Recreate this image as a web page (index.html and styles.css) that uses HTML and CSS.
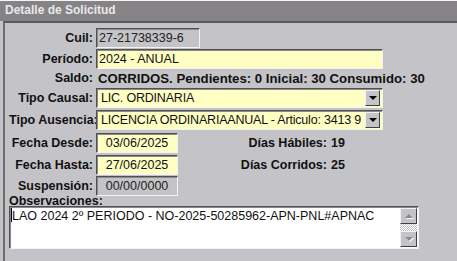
FILE: index.html
```html
<!DOCTYPE html>
<html lang="es">
<head>
    <meta charset="UTF-8">
    <title>Detalle de Solicitud</title>
    <link rel="stylesheet" href="styles.css">
</head>
<body>
    <div class="window">
        <div class="titlebar">Detalle de Solicitud</div>
        <div class="panel">
            <div class="form">
                <label class="lbl">Cuil:</label>
                <div class="row"><div class="field field-ro field-cuil">27-21738339-6</div></div>

                <label class="lbl">Período:</label>
                <div class="row"><div class="field field-edit field-wide">2024 - ANUAL</div></div>

                <label class="lbl lbl-saldo">Saldo:</label>
                <div class="row saldo">CORRIDOS. Pendientes: 0 Inicial: 30 Consumido: 30</div>

                <label class="lbl">Tipo Causal:</label>
                <div class="row">
                    <div class="field field-edit field-wide select">
                        <span class="select-text">LIC. ORDINARIA</span>
                        <span class="select-btn"><span class="arrow-down"></span></span>
                    </div>
                </div>

                <label class="lbl gap-1">Tipo Ausencia:</label>
                <div class="row gap-1">
                    <div class="field field-edit field-wide select">
                        <span class="select-text">LICENCIA ORDINARIAANUAL - Articulo: 3413 9</span>
                        <span class="select-btn"><span class="arrow-down"></span></span>
                    </div>
                </div>

                <label class="lbl gap-2">Fecha Desde:</label>
                <div class="row gap-2">
                    <div class="field field-edit field-date">03/06/2025</div>
                    <div class="info"><span class="info-label">Días Hábiles:</span> <span class="info-value">19</span></div>
                </div>

                <label class="lbl gap-1">Fecha Hasta:</label>
                <div class="row gap-1">
                    <div class="field field-edit field-date">27/06/2025</div>
                    <div class="info"><span class="info-label">Días Corridos:</span> <span class="info-value">25</span></div>
                </div>

                <label class="lbl">Suspensión:</label>
                <div class="row"><div class="field field-ro field-date">00/00/0000</div></div>
            </div>

            <div class="obs-label">Observaciones:</div>
            <div class="obs-box">
                <div class="obs-text"><span class="caret"></span>LAO 2024 2º PERIODO - NO-2025-50285962-APN-PNL#APNAC</div>
                <div class="scrollbar">
                    <div class="sb-btn"><span class="arrow-up"></span></div>
                    <div class="sb-track"></div>
                    <div class="sb-btn"><span class="arrow-down arrow-dim"></span></div>
                </div>
            </div>
        </div>
    </div>
</body>
</html>
```

FILE: styles.css
```css
* {
    margin: 0;
    padding: 0;
    box-sizing: border-box;
}

body {
    background: #c4c3c7;
    font-family: 'Liberation Sans', Arial, sans-serif;
    color: #111;
    width: 457px;
    height: 261px;
    overflow: hidden;
}

.window {
    height: 261px;
    display: flex;
    flex-direction: column;
}

.titlebar {
    height: 21px;
    border-top: 1px solid #f4f4f4;
    background: #858386;
    color: #e8e8e8;
    font-weight: bold;
    font-size: 12px;
    line-height: 19px;
    padding-left: 5px;
}

.panel {
    flex: 1;
    margin-left: 3px;
    border-top: 2px solid #5a595c;
    border-left: 2px solid #6e6d70;
    padding: 5px 0 0 4px;
}

.form {
    display: grid;
    grid-template-columns: 84px 1fr;
    column-gap: 3px;
    row-gap: 1px;
}

.gap-1 {
    margin-top: 1px;
}

.gap-2 {
    margin-top: 2px;
}

.lbl {
    font-weight: bold;
    font-size: 12.5px;
    text-align: right;
    line-height: 20px;
    white-space: nowrap;
}

.lbl-saldo {
    line-height: 17px;
}

.row {
    display: flex;
    align-items: center;
    height: 20px;
}

.saldo {
    height: 17px;
    font-weight: bold;
    font-size: 13.2px;
    padding-left: 2px;
    white-space: nowrap;
}

.field {
    height: 20px;
    border: 1px solid;
    border-color: #505050 #f2f2f2 #f2f2f2 #505050;
    box-shadow: inset 1px 1px 0 #8a898c;
    font-size: 12.5px;
    line-height: 18px;
    padding-left: 2px;
    white-space: nowrap;
    overflow: hidden;
}

.field-ro {
    background: #c4c3c7;
    color: #222;
}

.field-edit {
    background: #ffffc4;
}

.field-cuil {
    width: 104px;
}

.field-wide {
    width: 287px;
}

.field-date {
    width: 82px;
    text-align: center;
    padding-left: 0;
}

.select {
    display: flex;
    align-items: center;
    padding-right: 2px;
}

.select-text {
    flex: 1;
    overflow: hidden;
    padding-left: 2px;
    letter-spacing: -0.2px;
}

.select-btn {
    width: 15px;
    height: 16px;
    background: #c4c3c7;
    border: 1px solid;
    border-color: #f2f2f2 #404040 #404040 #f2f2f2;
    display: flex;
    align-items: center;
    justify-content: center;
}

.arrow-down {
    width: 0;
    height: 0;
    border-left: 4px solid transparent;
    border-right: 4px solid transparent;
    border-top: 4px solid #000;
}

.arrow-up {
    width: 0;
    height: 0;
    border-left: 4px solid transparent;
    border-right: 4px solid transparent;
    border-bottom: 4px solid #8a898c;
    filter: drop-shadow(1px 1px 0 #fff);
}

.arrow-dim {
    border-top-color: #8a898c;
    filter: drop-shadow(1px 1px 0 #fff);
}

.info {
    display: flex;
    font-weight: bold;
    font-size: 12.5px;
}

.info-label {
    width: 149px;
    text-align: right;
}

.info-value {
    padding-left: 4px;
}

.obs-label {
    font-weight: bold;
    font-size: 12.5px;
    line-height: 12px;
    height: 11px;
    margin-top: -1px;
}

.obs-box {
    width: 410px;
    height: 43px;
    display: flex;
    background: #fff;
    border: 1px solid;
    border-color: #505050 #f2f2f2 #f2f2f2 #505050;
    box-shadow: inset 1px 1px 0 #8a898c;
}

.obs-text {
    flex: 1;
    font-size: 12.5px;
    line-height: 16px;
    padding: 1px 0 0 1px;
    white-space: nowrap;
    overflow: hidden;
}

.caret {
    display: inline-block;
    width: 1px;
    height: 14px;
    background: #000;
    vertical-align: -2px;
}

.scrollbar {
    width: 17px;
    display: flex;
    flex-direction: column;
    margin: 1px 1px 1px 0;
}

.sb-btn {
    height: 16px;
    background: #c4c3c7;
    border: 1px solid;
    border-color: #f2f2f2 #404040 #404040 #f2f2f2;
    display: flex;
    align-items: center;
    justify-content: center;
}

.sb-track {
    flex: 1;
    background: repeating-conic-gradient(#c4c3c7 0 25%, #fff 0 50%) 0 0 / 2px 2px;
}
```
